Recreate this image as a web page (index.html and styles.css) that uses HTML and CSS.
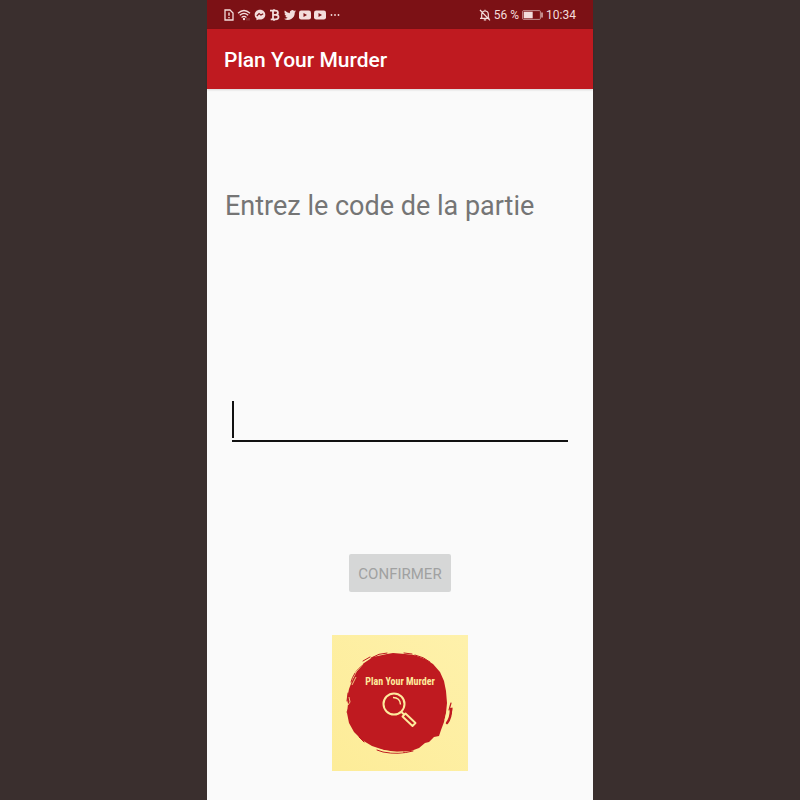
FILE: index.html
```html
<!DOCTYPE html>
<html lang="fr">
<head>
<meta charset="utf-8">
<meta name="viewport" content="width=device-width, initial-scale=1">
<title>Plan Your Murder</title>
<link rel="stylesheet" href="styles.css">
</head>
<body>
<div class="phone">
  <div class="status">
    <div class="status-group notifications">
      <svg width="10" height="12" viewBox="0 0 10 12"><path d="M1 1h5l3 3v7H1z" fill="none" stroke="currentColor" stroke-width="1.3"/><path d="M5 3.5v3.2M5 8v1.3" stroke="currentColor" stroke-width="1.4"/></svg>
      <svg width="14" height="12" viewBox="0 0 14 12"><g fill="none" stroke="currentColor" stroke-width="1.3"><path d="M1 4.2Q7-1.2 13 4.2M2.8 6.3Q7 2.5 11.2 6.3M4.6 8.4Q7 6.3 9.4 8.4"/></g><circle cx="7" cy="10" r="1.2" fill="currentColor"/><path d="M10 9v2.5M12 9v2.500" stroke="currentColor" stroke-width=".6" opacity=".5"/></svg>
      <svg width="12" height="12" viewBox="0 0 12 12"><path d="M6 .7C2.900.7.7 2.900.7 5.700c0 1.600.7 2.900 1.800 3.800v1.800l1.800-.9c.5.2 1.100.2 1.700.2 3.100 0 5.300-2.100 5.300-4.900S9.100.7 6 .7z" fill="currentColor"/><path d="m2.800 7 2.300-2.400 1.800 1.500 2.300-1.400" fill="none" stroke="#7c1115" stroke-width="1.2"/></svg>
      <svg width="12" height="12" viewBox="0 0 12 12"><path d="M1 1.700h5.500c3.200 0 3.200 4 .2 4.100 3.800 0 3.700 4.500 0 4.500H1.700M4 1.700v8.600M4.300 5.800h2.500M5 .2v2M5 10v1.800" fill="none" stroke="currentColor" stroke-width="1.8"/></svg>
      <svg width="12" height="12" viewBox="0 0 24 24"><path d="M24 4.6a10 10 0 0 1-2.8.8 5 5 0 0 0 2.1-2.7 10 10 0 0 1-3.1 1.2 4.9 4.9 0 0 0-8.4 4.5A14 14 0 0 1 1.7 3.2a4.9 4.9 0 0 0 1.5 6.5 5 5 0 0 1-2.2-.6 4.900 4.900 0 0 0 4 4.900 5 5 0 0 1-2.300.1 4.900 4.900 0 0 0 4.600 3.400A10 10 0 0 1 0 19.500a14 14 0 0 0 21.500-12.400A10 10 0 0 0 24 4.600z" fill="currentColor"/></svg>
      <svg width="12" height="10" viewBox="0 0 12 10"><rect y=".5" width="12" height="9" rx="2.2" fill="currentColor"/><path d="M4.500 3v4L8 5z" fill="#7c1115"/></svg>
      <svg width="12" height="10" viewBox="0 0 12 10"><rect y=".5" width="12" height="9" rx="2.2" fill="currentColor"/><path d="M4.500 3v4L8 5z" fill="#7c1115"/></svg>
      <svg width="12" height="4" viewBox="0 0 12 4"><g fill="currentColor"><circle cx="2.5" cy="2" r=".9"/><circle cx="6" cy="2" r=".9"/><circle cx="9.5" cy="2" r=".9"/></g></svg>
    </div>
    <div class="status-group">
      <svg width="12" height="12" viewBox="0 0 12 12"><path d="M1 9.300h9.500M2.700 9V5.200C2.700 3.200 4 2 6 2s3.300 1.200 3.300 3.200V9M6 .7V2M4.800 10.800h2.400M1 1l10 10.300" fill="none" stroke="currentColor" stroke-width="1.2"/></svg>
      <span>56 %</span>
      <svg width="21" height="10" viewBox="0 0 21 10"><rect x=".6" y=".6" width="17.8" height="8.8" rx="1" fill="none" stroke="currentColor" stroke-width=".8" opacity=".75"/><path d="M1.7 1.7h9v6.6h-9z" fill="currentColor"/><path d="M20 2.500v5" stroke="currentColor" stroke-width="1.2"/></svg>
      <time>10:34</time>
    </div>
  </div>
  <header class="app-bar"><h1>Plan Your Murder</h1></header>
  <main>
    <form>
      <label for="code">Entrez le code de la partie</label>
      <div class="field"><input id="code" type="text" autocomplete="off"><span class="caret"></span></div>
      <button type="submit" disabled>CONFIRMER</button>
    </form>
    <svg class="logo" viewBox="0 0 136 136" role="img" aria-label="Plan Your Murder">
      <defs><linearGradient id="paper" x1="1" y1="0" x2="0" y2="1"><stop offset="0" stop-color="#fef1ab"/><stop offset="1" stop-color="#fdec98"/></linearGradient></defs>
      <rect width="136" height="136" fill="url(#paper)"/>
      <path fill="#bf1a20" d="M55 19l6-1 12 1 9 1 11 4 8 5 7 8 4 9 2 10 1 12-1 10-2 9-3 8-2 6-5 1-5 5-4 1-6 5-8 3-14 1-13-2-12-4-10-6-8-8-5-9-2-10 1-9-1-5 2-10 3-8 5-10 7-8 9-6z"/>
      <g fill="none" stroke="#bf1a20" stroke-linecap="round">
        <path d="M19 47q2-9 12-18M22 44q5-10 13-16M31 26l7-4M39 23q8-5 16-5M72 18l8 1M83 20q9 2 15 7M16 58l-1 8M17 73l-2 4M27 102l5 5M45 115l6 2q15 3 30-1" stroke-width="1"/>
        <path d="M119 74q0 9-4 14" stroke-width="2.5"/>
        <path d="M119 68l-2 7M120 73l-1 6" stroke-width="1.2"/>
      </g>
      <path d="M20 50l4-8M23 38l8-9M17 62l1 5M16 70l2-3M49 115q11 3 22 2M116 73l-3 12" fill="none" stroke="#fdec98" stroke-width=".8"/>
      <text class="logo-text" x="68" y="50" text-anchor="middle">Plan Your Murder</text>
      <g fill="none" stroke="#feeb9d">
        <circle cx="62" cy="69" r="10.5" stroke-width="2"/>
        <path d="M61 62.500q7 0 7.500 7" stroke-width="1.4"/>
        <path d="M69.500 77l2.500 2.500M73.500 78.500l10 9.500-3 3-10-9.500z" stroke-width="1.9" stroke-linejoin="round"/>
      </g>
    </svg>
  </main>
</div>
</body>
</html>
```
FILE: styles.css
```css
* { box-sizing: border-box; }
body {
  margin: 0;
  background: #3a2f2e;
  font-family: Roboto, "Liberation Sans", sans-serif;
}
.phone {
  max-width: 386px;
  min-height: 100vh;
  margin: 0 auto;
  background: #fafafa;
}
.status {
  display: flex;
  align-items: center;
  justify-content: space-between;
  height: 29px;
  padding: 0 17px;
  background: #7c1115;
  color: #f3dddc;
  font-size: 12px;
}
.status-group { display: flex; align-items: center; gap: 3px; }
.app-bar {
  display: flex;
  align-items: center;
  height: 60px;
  padding: 2px 17px 0;
  background: #bf1a20;
  color: #fff;
  box-shadow: 0 1px 2px rgba(0, 0, 0, .15);
}
h1 { margin: 0; font-size: 21px; line-height: 28px; font-weight: 500; }
main {
  display: flex;
  flex-direction: column;
  align-items: center;
  padding: 101px 18px 29px;
}
form {
  display: flex;
  flex-direction: column;
  align-items: center;
  width: 100%;
}
label {
  align-self: flex-start;
  color: #757575;
  font-size: 27px;
  line-height: 32px;
}
.field { position: relative; align-self: stretch; margin: 175px 7px 112px; }
.field input {
  display: block;
  width: 100%;
  height: 45px;
  padding: 0 4px;
  border: 0;
  border-bottom: 2px solid #111;
  outline: 0;
  background: transparent;
  font: inherit;
  font-size: 27px;
}
.caret {
  position: absolute;
  left: 0;
  top: 4px;
  width: 2px;
  height: 37px;
  background: #111;
}
button {
  height: 38px;
  padding: 2px 9px 0;
  border: 0;
  border-radius: 2px;
  background: #d6d7d7;
  color: #a0a1a1;
  font: 400 15px/20px Roboto, "Liberation Sans", sans-serif;
}
.logo { display: block; width: 136px; height: 136px; margin-top: 43px; }
.logo-text {
  fill: #feeb9d;
  font: bold 10px "Roboto Condensed", "Liberation Sans Narrow", "Liberation Sans", sans-serif;
}
```
